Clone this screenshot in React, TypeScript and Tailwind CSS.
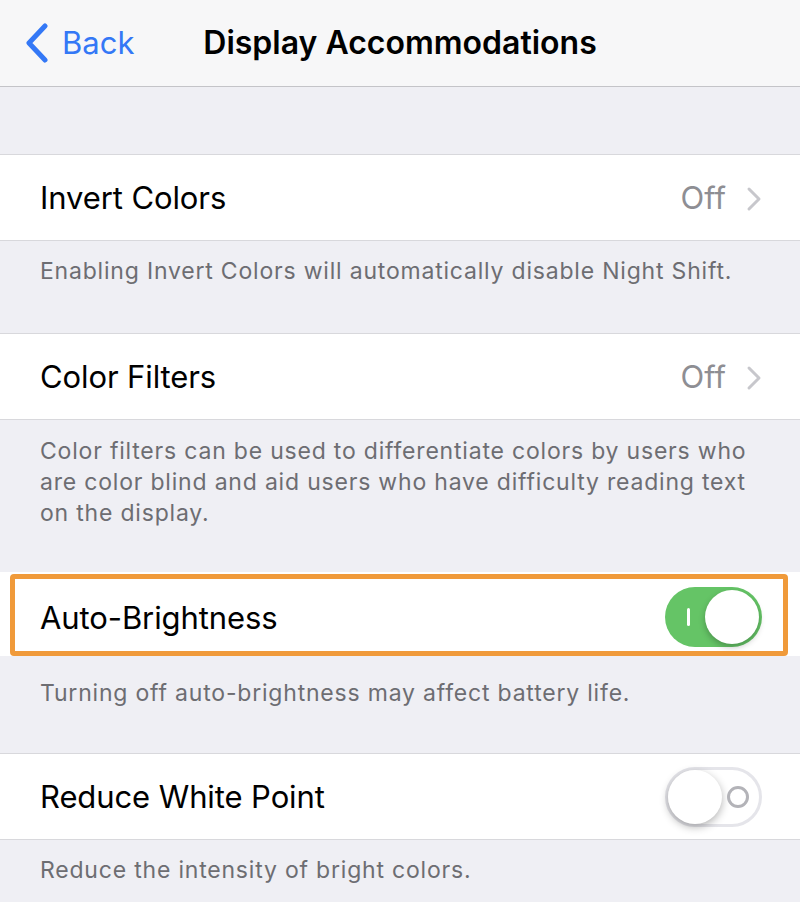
import React from 'react';

const font = { fontFamily: 'Inter, "Noto Sans", sans-serif' };

const Chevron = () => (
  <svg width="16" height="26" viewBox="0 0 16 26" fill="none">
    <path d="M3 3l10 10-10 10" stroke="#c7c7cc" strokeWidth="3" strokeLinecap="round" strokeLinejoin="round" />
  </svg>
);

const Toggle = ({ on }: { on: boolean }) =>
  on ? (
    <div className="relative w-[97px] h-[60px] rounded-full bg-[#65c466] flex items-center justify-end pr-[3px]">
      <div className="absolute left-[22px] top-[21px] w-[3px] h-[18px] bg-white rounded-full" />
      <div className="w-[54px] h-[54px] rounded-full bg-white shadow-[0_3px_6px_rgba(0,0,0,0.25)]" />
    </div>
  ) : (
    <div className="relative w-[97px] h-[60px] rounded-full bg-white border-[3px] border-[#e5e5ea] flex items-center pl-0">
      <div className="w-[54px] h-[54px] rounded-full bg-white shadow-[0_3px_8px_rgba(0,0,0,0.3)]" />
      <div className="absolute right-[10px] top-[16px] w-[22px] h-[22px] rounded-full border-[3px] border-[#b3b3b8]" />
    </div>
  );

const Row = ({ label, value, toggle }: { label: string; value?: string; toggle?: boolean }) => (
  <div className="bg-white h-[87px] border-y border-[#d8d8dc] flex items-center justify-between pl-[40px] pr-[38px]">
    <span className="text-[31px] text-black tracking-[-0.1px] pt-[2px]">{label}</span>
    {value !== undefined && (
      <div className="flex items-center gap-[20px] pt-[2px]">
        <span className="text-[31px] text-[#8e8e93]">{value}</span>
        <Chevron />
      </div>
    )}
    {toggle !== undefined && <Toggle on={toggle} />}
  </div>
);

const Footer = ({ text, pt, pb }: { text: string; pt: string; pb: string }) => (
  <div className={`pl-[40px] pr-[40px] text-[23px] tracking-[0.8px] leading-[31px] text-[#6d6d72] ${pt} ${pb}`}>{text}</div>
);

export default function App() {
  return (
    <div className="w-[800px] h-[902px] overflow-hidden bg-[#efeff4]" style={font}>
      {/* header */}
      <div className="h-[87px] bg-[#f7f7f8] border-b border-[#c4c4c8] grid grid-cols-[1fr_auto_1fr] items-center">
        <div className="flex items-center pl-[25px] gap-[13px] text-[#3478f6]">
          <svg width="24" height="40" viewBox="0 0 24 40" fill="none">
            <path d="M20 3L4 20l16 17" stroke="#3478f6" strokeWidth="5" strokeLinecap="round" strokeLinejoin="round" />
          </svg>
          <span className="text-[31px]">Back</span>
        </div>
        <div className="text-[32px] font-semibold text-black tracking-[0px]">Display Accommodations</div>
        <div />
      </div>

      <div className="h-[67px]" />

      <Row label="Invert Colors" value="Off" />
      <Footer text="Enabling Invert Colors will automatically disable Night Shift." pt="pt-[15px]" pb="pb-[46px]" />

      <Row label="Color Filters" value="Off" />
      <Footer
        text="Color filters can be used to differentiate colors by users who are color blind and aid users who have difficulty reading text on the display."
        pt="pt-[16px]"
        pb="pb-[43px]"
      />

      <div className="relative">
        <div className="bg-white h-[84px] pt-[6px] flex items-center justify-between pl-[40px] pr-[38px]">
          <span className="text-[31px] text-black tracking-[-0.1px] pt-[2px]">Auto-Brightness</span>
          <Toggle on />
        </div>
        <div className="absolute left-[10px] right-[12px] top-[2px] bottom-[0px] border-[5px] border-[#f09a3a] rounded-[4px]" />
      </div>
      <Footer text="Turning off auto-brightness may affect battery life." pt="pt-[22px]" pb="pb-[44px]" />

      <Row label="Reduce White Point" toggle={false} />
      <Footer text="Reduce the intensity of bright colors." pt="pt-[15px]" pb="pb-[40px]" />
    </div>
  );
}
